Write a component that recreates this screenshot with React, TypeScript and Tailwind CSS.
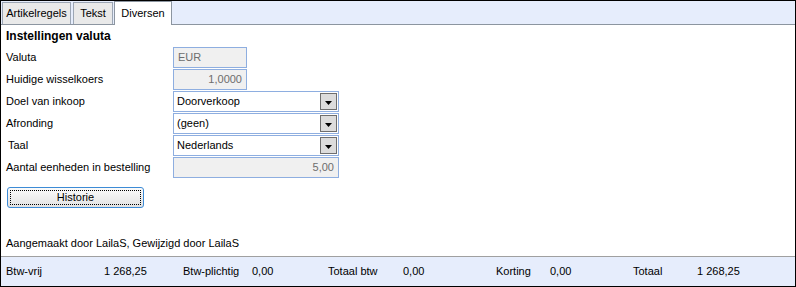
import React from "react";

const font = { fontFamily: '"Liberation Sans", Arial, sans-serif' };

function ReadOnlyBox({ value, width, align }: { value: string; width: string; align: "left" | "right" }) {
  return (
    <div
      className={`${width} h-[21px] border border-[#8eaee0] bg-[#f0f0f0] text-[#6d6d6d] flex items-center px-[4px] ${
        align === "right" ? "justify-end" : "justify-start"
      }`}
    >
      {value}
    </div>
  );
}

function Combo({ value }: { value: string }) {
  return (
    <div className="w-[166px] h-[21px] border border-[#8eaee0] bg-white flex items-center pl-[3px] pr-[1px]">
      <span className="flex-1 text-black">{value}</span>
      <div className="w-[17px] h-[17px] border border-[#6e6e6e] bg-[#dcdcdc] flex items-center justify-center">
        <svg width="7" height="4" viewBox="0 0 7 4" className="mt-[3px]">
          <path d="M0 0 H7 L3.5 4 Z" fill="#000" />
        </svg>
      </div>
    </div>
  );
}

export default function App() {
  const rows: { label: string; indent?: boolean; field: React.ReactNode }[] = [
    { label: "Valuta", field: <ReadOnlyBox value="EUR" width="w-[74px]" align="left" /> },
    { label: "Huidige wisselkoers", field: <ReadOnlyBox value="1,0000" width="w-[74px]" align="right" /> },
    { label: "Doel van inkoop", field: <Combo value="Doorverkoop" /> },
    { label: "Afronding", field: <Combo value="(geen)" /> },
    { label: "Taal", indent: true, field: <Combo value="Nederlands" /> },
    { label: "Aantal eenheden in bestelling", field: <ReadOnlyBox value="5,00" width="w-[166px]" align="right" /> },
  ];

  const totals = [
    { text: "Btw-vrij", w: "w-[98px]" },
    { text: "1 268,25", w: "w-[79px]" },
    { text: "Btw-plichtig", w: "w-[69px]" },
    { text: "0,00", w: "w-[76px]" },
    { text: "Totaal btw", w: "w-[75px]" },
    { text: "0,00", w: "w-[93px]" },
    { text: "Korting", w: "w-[54px]" },
    { text: "0,00", w: "w-[83px]" },
    { text: "Totaal", w: "w-[64px]" },
    { text: "1 268,25", w: "w-[80px]" },
  ];

  return (
    <div style={font} className="w-[796px] h-[287px] border border-black bg-white text-[11px] text-black flex flex-col overflow-hidden">
      {/* Tabs */}
      <div className="h-[24px] bg-[#e6edfc] flex items-start pl-[1px] relative">
        <div className="absolute left-0 right-0 bottom-0 h-px bg-[#8c95a0]" />
        <div className="mt-[1px] h-[22px] w-[69px] border border-[#9ca6b4] border-b-0 bg-[#e9e9e9] flex items-center justify-center relative">
          Artikelregels
        </div>
        <div className="mt-[1px] ml-[2px] h-[22px] w-[40px] border border-[#9ca6b4] border-b-0 bg-[#e9e9e9] flex items-center justify-center relative">
          Tekst
        </div>
        <div className="ml-px h-[24px] w-[58px] border border-[#8c95a0] border-b-0 bg-white flex items-center justify-center pb-[1px] relative">
          Diversen
        </div>
      </div>

      {/* Content */}
      <div className="h-[231px] pl-[5px] flex flex-col">
        <div className="h-[22px] flex items-center text-[12px] font-bold">Instellingen valuta</div>
        {rows.map((r) => (
          <div key={r.label} className="flex items-center h-[21px] mb-px">
            <div className={`w-[167px] ${r.indent ? "pl-[2px]" : ""}`}>{r.label}</div>
            {r.field}
          </div>
        ))}
        <button className="mt-[8px] ml-px w-[137px] h-[21px] rounded-[3px] border border-[#3d8bd6] bg-gradient-to-b from-[#fbfbfb] to-[#e2e2e2] p-[2px]">
          <div className="w-full h-full border border-dotted border-black flex items-center justify-center">Historie</div>
        </button>
        <div className="mt-[27px]">Aangemaakt door LailaS, Gewijzigd door LailaS</div>
      </div>

      {/* Totals */}
      <div className="h-[30px] border-t border-[#a0a0a0] bg-[#e6edfc] flex items-center pl-[5px]">
        {totals.map((t, i) => (
          <div key={i} className={t.w}>
            {t.text}
          </div>
        ))}
      </div>
    </div>
  );
}
